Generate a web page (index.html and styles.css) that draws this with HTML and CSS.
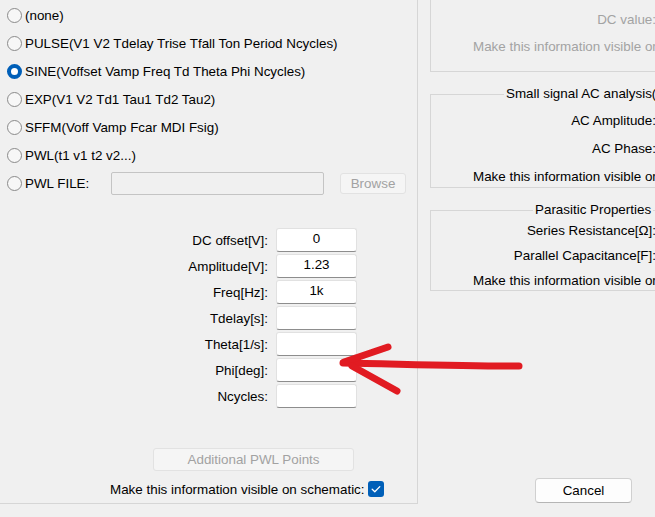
FILE: index.html
```html
<!DOCTYPE html>
<html>
<head>
<meta charset="utf-8">
<link rel="stylesheet" href="styles.css">
</head>
<body>
<div class="page">
  <div class="left">
    <div class="radios">
      <div class="rrow"><span class="radio"></span><span>(none)</span></div>
      <div class="rrow"><span class="radio"></span><span>PULSE(V1 V2 Tdelay Trise Tfall Ton Period Ncycles)</span></div>
      <div class="rrow"><span class="radio on"></span><span>SINE(Voffset Vamp Freq Td Theta Phi Ncycles)</span></div>
      <div class="rrow"><span class="radio"></span><span>EXP(V1 V2 Td1 Tau1 Td2 Tau2)</span></div>
      <div class="rrow"><span class="radio"></span><span>SFFM(Voff Vamp Fcar MDI Fsig)</span></div>
      <div class="rrow"><span class="radio"></span><span>PWL(t1 v1 t2 v2...)</span></div>
      <div class="rrow"><span class="radio"></span><span class="pwl-label">PWL FILE:</span><span class="file-input"></span><span class="browse">Browse</span></div>
    </div>
    <div class="fields">
      <label>DC offset[V]:</label><span class="tbox">0</span>
      <label>Amplitude[V]:</label><span class="tbox">1.23</span>
      <label>Freq[Hz]:</label><span class="tbox">1k</span>
      <label>Tdelay[s]:</label><span class="tbox"></span>
      <label>Theta[1/s]:</label><span class="tbox"></span>
      <label>Phi[deg]:</label><span class="tbox"></span>
      <label>Ncycles:</label><span class="tbox"></span>
    </div>
    <div class="pwl-btn">Additional PWL Points</div>
    <div class="visible-row"><span>Make this information visible on schematic:</span><span class="check"><svg width="16" height="16" viewBox="0 0 16 16"><path d="M4.2 8.3 L6.8 10.8 L11.8 5.6" fill="none" stroke="#fff" stroke-width="1.3" stroke-linecap="round" stroke-linejoin="round"/></svg></span></div>
  </div>
  <div class="right">
    <div class="box box1">
      <div class="lbl dis">DC value:</div>
      <div class="mk dis">Make this information visible on schematic:</div>
    </div>
    <div class="box box2">
      <div class="title t2">Small signal AC analysis(.AC)</div>
      <div class="lbl first2">AC Amplitude:</div>
      <div class="lbl">AC Phase:</div>
      <div class="mk">Make this information visible on schematic:</div>
    </div>
    <div class="box box3">
      <div class="title t3">Parasitic Properties</div>
      <div class="lbl first3">Series Resistance[Ω]:</div>
      <div class="lbl">Parallel Capacitance[F]:</div>
      <div class="mk">Make this information visible on schematic:</div>
    </div>
    <div class="cancel">Cancel</div>
  </div>
</div>
<svg class="arrow" width="200" height="70" viewBox="330 335 200 70">
  <path d="M343 363 C 400 364, 460 366, 519 366" fill="none" stroke="#e11b22" stroke-width="7" stroke-linecap="round"/>
  <path d="M344 362 L388 347" fill="none" stroke="#e11b22" stroke-width="7" stroke-linecap="round"/>
  <path d="M352 366 L397 391" fill="none" stroke="#e11b22" stroke-width="7" stroke-linecap="round"/>
</svg>
</body>
</html>
```
FILE: styles.css
```css
html, body {
  margin: 0;
  padding: 0;
}
body {
  width: 655px;
  height: 517px;
  overflow: hidden;
  background: #f0f0f0;
  font-family: "Liberation Sans", Arial, sans-serif;
  font-size: 13.4px;
  color: #000;
  position: relative;
}
.page {
  display: flex;
  align-items: flex-start;
}
.left {
  width: 418px;
  height: 504px;
  box-sizing: border-box;
  border-right: 1px solid #d6d6d6;
  border-bottom: 1px solid #d6d6d6;
  display: flex;
  flex-direction: column;
  flex-shrink: 0;
}
.radios {
  padding-top: 1px;
  display: flex;
  flex-direction: column;
}
.rrow {
  height: 28px;
  display: flex;
  align-items: center;
  padding-left: 7px;
  white-space: nowrap;
}
.radio {
  width: 15px;
  height: 15px;
  box-sizing: border-box;
  border: 1px solid #8a8a8a;
  border-radius: 50%;
  background: #f7f7f7;
  margin-right: 3px;
  flex-shrink: 0;
}
.radio.on {
  border: 4.5px solid #005fb8;
  background: #fff;
}
.pwl-label {
  width: 86px;
}
.file-input {
  width: 213px;
  height: 23px;
  box-sizing: border-box;
  border: 1px solid #c4c4c4;
  border-radius: 2px;
  background: #f0f0f0;
}
.browse {
  margin-left: 16px;
  width: 66px;
  height: 21px;
  box-sizing: border-box;
  border: 1px solid #e2e2e2;
  border-radius: 3px;
  background: #f5f5f5;
  color: #a2a2a2;
  display: flex;
  align-items: center;
  justify-content: center;
}
.fields {
  margin-top: 31px;
  display: grid;
  grid-template-columns: 268px 81px;
  column-gap: 8px;
  row-gap: 2px;
  grid-auto-rows: 24px;
}
.fields label {
  text-align: right;
  line-height: 25px;
}
.tbox {
  box-sizing: border-box;
  border: 1px solid #e1e1e1;
  border-bottom-color: #8d8d8d;
  border-radius: 3px;
  background: #fff;
  text-align: center;
  line-height: 20px;
}
.pwl-btn {
  margin-top: 40px;
  margin-left: 153px;
  width: 201px;
  height: 23px;
  box-sizing: border-box;
  border: 1px solid #e2e2e2;
  border-radius: 3px;
  background: #f5f5f5;
  color: #a2a2a2;
  display: flex;
  align-items: center;
  justify-content: center;
}
.visible-row {
  margin-top: 10px;
  margin-left: 110px;
  height: 16px;
  display: flex;
  align-items: center;
  white-space: nowrap;
}
.check {
  margin-left: 3px;
  width: 16px;
  height: 16px;
  border-radius: 3px;
  background: #005fb8;
  display: flex;
}
.right {
  flex-shrink: 0;
  width: 237px;
  display: flex;
  flex-direction: column;
}
.box {
  margin-left: 12px;
  width: 270px;
  border: 1px solid #d6d6d6;
  display: flex;
  flex-direction: column;
  white-space: nowrap;
}
.box1 {
  border-top: none;
  height: 72px;
  padding-top: 12px;
  box-sizing: border-box;
  gap: 11px;
}
.lbl {
  width: 225px;
  text-align: right;
  line-height: 16px;
}
.mk {
  padding-left: 42px;
  line-height: 16px;
}
.dis {
  color: #a3a3a3;
}
.box2 {
  margin-top: 22px;
  padding-bottom: 2px;
}
.title {
  margin-top: -9px;
  width: fit-content;
  padding: 0 2px;
  background: #f0f0f0;
  line-height: 16px;
}
.t2 {
  margin-left: 73px;
}
.t3 {
  margin-left: 102px;
}
.first2 {
  margin-top: 11px;
}
.box2 .lbl + .lbl, .box2 .lbl + .mk {
  margin-top: 12px;
}
.box2 .mk {
  margin-top: 11px;
}
.box3 {
  margin-top: 22px;
  padding-bottom: 1px;
}
.first3 {
  margin-top: 5px;
}
.box3 .lbl + .lbl, .box3 .lbl + .mk {
  margin-top: 9px;
}
.cancel {
  margin-top: 187px;
  margin-left: 117px;
  width: 97px;
  height: 25px;
  box-sizing: border-box;
  border: 1px solid #d0d0d0;
  border-bottom-color: #b5b5b5;
  border-radius: 4px;
  background: #fdfdfd;
  display: flex;
  align-items: center;
  justify-content: center;
}
.arrow {
  position: absolute;
  left: 330px;
  top: 335px;
}
```
